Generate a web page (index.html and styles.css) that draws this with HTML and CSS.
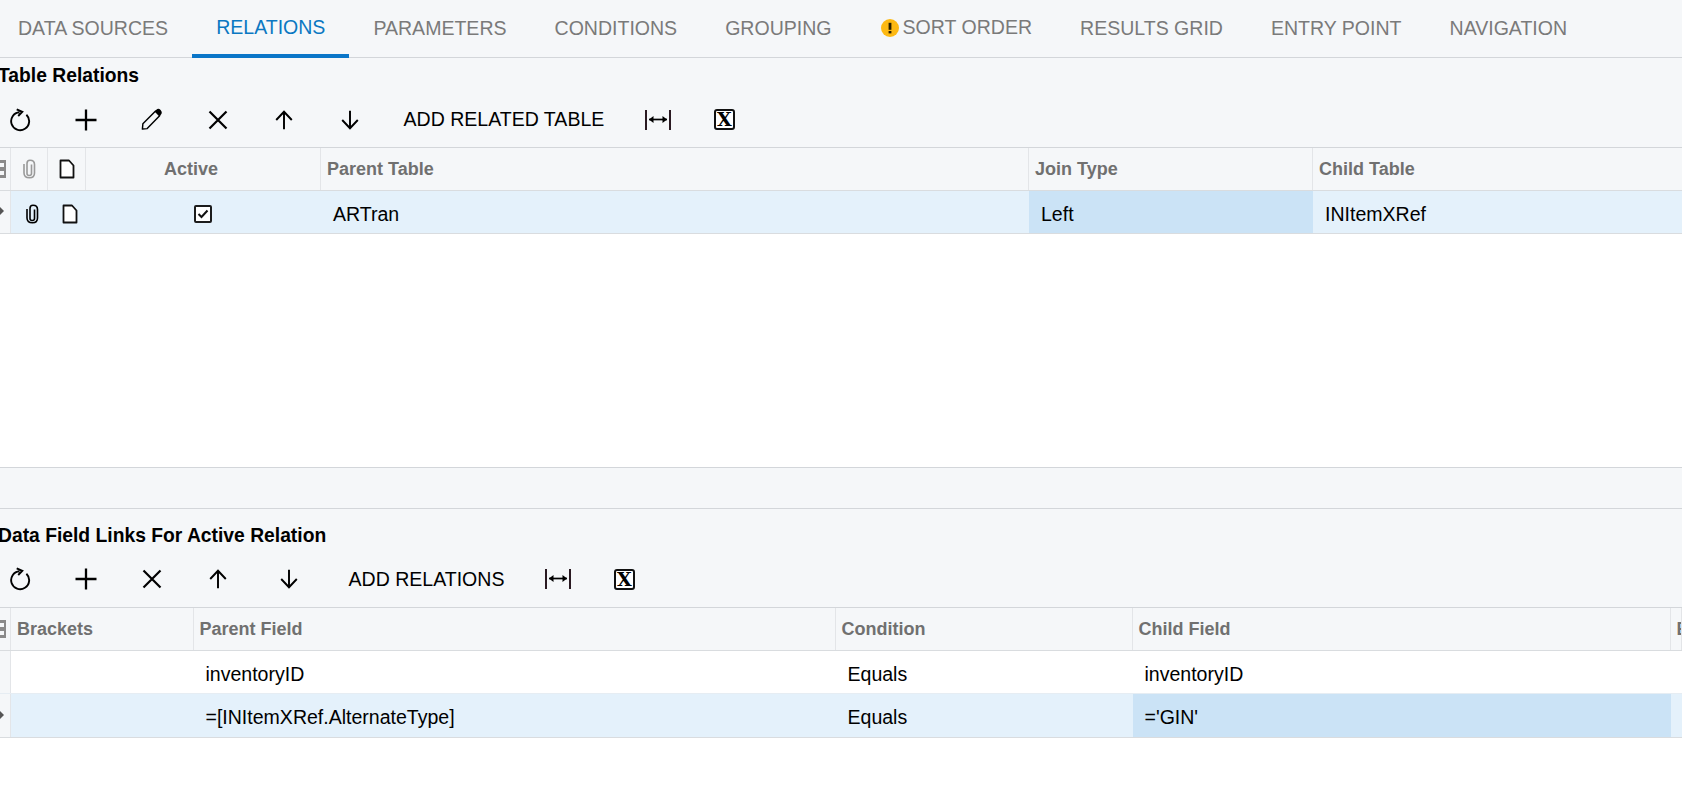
FILE: index.html
```
<!DOCTYPE html>
<html lang="en">
<head>
<meta charset="utf-8">
<title>Relations</title>
<link rel="stylesheet" href="styles.css">
</head>
<body>
<svg class="defs" width="0" height="0" aria-hidden="true">
  <symbol id="i-refresh" viewBox="0 0 24 24"><path d="M18.400 6.700A9 9 0 1 1 11.500 4.200M8.700 1.300L14.300 3.800L10.200 8" fill="none" stroke="currentColor" stroke-width="1.900"/></symbol>
  <symbol id="i-plus" viewBox="0 0 24 24"><path d="M1.500 12H22.500M12 1.500V22.500" fill="none" stroke="currentColor" stroke-width="2.300"/></symbol>
  <symbol id="i-pencil" viewBox="0 0 24 24"><path d="M2.500 22L3 16.500L16 3.500L20.500 8L7.500 21.500Z" fill="none" stroke="currentColor" stroke-width="1.500" stroke-linejoin="round"/><path d="M15.500 3L18 1Q19.800 .2 21.500 2Q23.500 4 22.500 6L20.500 8.500Z" fill="currentColor"/></symbol>
  <symbol id="i-x" viewBox="0 0 24 24"><path d="M3.500 3.500L20.500 20.500M20.500 3.500L3.500 20.500" fill="none" stroke="currentColor" stroke-width="2.200"/></symbol>
  <symbol id="i-up" viewBox="0 0 24 24"><path d="M12 22V3.500M3.500 12L12 3L20.500 12" fill="none" stroke="currentColor" stroke-width="2.100"/></symbol>
  <symbol id="i-down" viewBox="0 0 24 24"><path d="M12 2V20.500M3.500 12L12 21L20.500 12" fill="none" stroke="currentColor" stroke-width="2.100"/></symbol>
  <symbol id="i-fit" viewBox="0 0 28 24"><path d="M2 2V22M26 2V22" fill="none" stroke="#2a1a22" stroke-width="2"/><path d="M5 11.500H23" fill="none" stroke="currentColor" stroke-width="1.700"/><path d="M5 11.500L9.500 8V15ZM23 11.500L18.500 8V15Z" fill="currentColor"/></symbol>
  <symbol id="i-clip" viewBox="0 0 14 20"><path d="M9.500 5.500V14.500Q9.500 16.500 7.200 16.500Q5 16.500 5 14.500V4.500Q5 1.300 8 1.300Q12.500 1.300 12.500 5.500V14Q12.500 18.800 7.500 18.800Q2 18.800 2 14V5" fill="none" stroke="currentColor" stroke-width="1.600"/></symbol>
  <symbol id="i-doc" viewBox="0 0 16 20"><path d="M1.500 1.500H10L14.500 6.500V18.500H1.500Z" fill="#fff" stroke="currentColor" stroke-width="1.800" stroke-linejoin="round"/></symbol>
  <symbol id="i-check" viewBox="0 0 18 18"><rect x="1" y="1" width="16" height="16" rx="1" fill="#fff" stroke="#1c1c1c" stroke-width="2"/><path d="M4.500 9L7.500 12L13.500 5.500" fill="none" stroke="#111" stroke-width="2"/></symbol>
  <symbol id="i-warn" viewBox="0 0 18 18"><circle cx="9" cy="9" r="9" fill="#fdb913"/><rect x="7.600" y="3.800" width="2.800" height="7" fill="#2a2000"/><rect x="7.600" y="12" width="2.800" height="2.400" fill="#2a2000"/></symbol>
  <symbol id="i-rowhead" viewBox="0 0 8 20"><path d="M0 1H6V19H0Z" fill="currentColor"/><path d="M0 4H4V8H0ZM0 12H4V16H0Z" fill="#f5f7f9"/></symbol>
  <symbol id="i-arrow" viewBox="0 0 4 8"><path d="M0 0L4 4L0 8Z" fill="currentColor"/></symbol>
</svg>

<nav class="tabs">
  <a class="tab">DATA SOURCES</a>
  <a class="tab tab-active">RELATIONS</a>
  <a class="tab">PARAMETERS</a>
  <a class="tab">CONDITIONS</a>
  <a class="tab">GROUPING</a>
  <a class="tab tab-warn"><svg class="warn"><use href="#i-warn"/></svg><span class="tab-warn-text">SORT ORDER</span></a>
  <a class="tab">RESULTS GRID</a>
  <a class="tab">ENTRY POINT</a>
  <a class="tab">NAVIGATION</a>
</nav>

<section class="panel panel-top">
  <h2 class="panel-title">Table Relations</h2>
  <div class="toolbar">
    <button class="tool"><svg class="ico ico-refresh"><use href="#i-refresh"/></svg></button>
    <button class="tool"><svg class="ico ico-plus"><use href="#i-plus"/></svg></button>
    <button class="tool"><svg class="ico ico-pencil"><use href="#i-pencil"/></svg></button>
    <button class="tool"><svg class="ico ico-x"><use href="#i-x"/></svg></button>
    <button class="tool"><svg class="ico ico-arrow"><use href="#i-up"/></svg></button>
    <button class="tool"><svg class="ico ico-arrow"><use href="#i-down"/></svg></button>
    <button class="tool tool-text">ADD RELATED TABLE</button>
    <button class="tool"><svg class="ico ico-fit"><use href="#i-fit"/></svg></button>
    <button class="tool"><span class="excel">X</span></button>
  </div>
  <div class="grid grid-relations">
    <div class="row row-head">
      <div class="cell cell-rowhead"><svg class="ico-rowhead"><use href="#i-rowhead"/></svg></div>
      <div class="cell cell-icon"><svg class="ico-clip ico-muted"><use href="#i-clip"/></svg></div>
      <div class="cell cell-icon"><svg class="ico-doc"><use href="#i-doc"/></svg></div>
      <div class="cell cell-active-head">Active</div>
      <div class="cell">Parent Table</div>
      <div class="cell">Join Type</div>
      <div class="cell cell-last">Child Table</div>
    </div>
    <div class="row row-body row-selected">
      <div class="cell cell-rowhead"><svg class="ico-rowarrow"><use href="#i-arrow"/></svg></div>
      <div class="cell cell-icon cell-icon-body"><svg class="ico-clip"><use href="#i-clip"/></svg></div>
      <div class="cell cell-icon cell-icon-body"><svg class="ico-doc"><use href="#i-doc"/></svg></div>
      <div class="cell cell-center"><svg class="ico-check"><use href="#i-check"/></svg></div>
      <div class="cell">ARTran</div>
      <div class="cell cell-current">Left</div>
      <div class="cell cell-last">INItemXRef</div>
    </div>
  </div>
</section>

<div class="splitter"></div>

<section class="panel panel-bottom">
  <h2 class="panel-title">Data Field Links For Active Relation</h2>
  <div class="toolbar">
    <button class="tool"><svg class="ico ico-refresh"><use href="#i-refresh"/></svg></button>
    <button class="tool"><svg class="ico ico-plus"><use href="#i-plus"/></svg></button>
    <button class="tool"><svg class="ico ico-x"><use href="#i-x"/></svg></button>
    <button class="tool"><svg class="ico ico-arrow"><use href="#i-up"/></svg></button>
    <button class="tool tool-shift"><svg class="ico ico-arrow"><use href="#i-down"/></svg></button>
    <button class="tool tool-text tool-shift">ADD RELATIONS</button>
    <button class="tool"><svg class="ico ico-fit"><use href="#i-fit"/></svg></button>
    <button class="tool"><span class="excel">X</span></button>
  </div>
  <div class="grid grid-links">
    <div class="row row-head">
      <div class="cell cell-rowhead"><svg class="ico-rowhead"><use href="#i-rowhead"/></svg></div>
      <div class="cell">Brackets</div>
      <div class="cell">Parent Field</div>
      <div class="cell">Condition</div>
      <div class="cell">Child Field</div>
      <div class="cell cell-clip">E</div>
    </div>
    <div class="row row-body row-plain">
      <div class="cell cell-rowhead"></div>
      <div class="cell"></div>
      <div class="cell">inventoryID</div>
      <div class="cell">Equals</div>
      <div class="cell">inventoryID</div>
      <div class="cell"></div>
    </div>
    <div class="row row-body row-selected row-tall">
      <div class="cell cell-rowhead"><svg class="ico-rowarrow"><use href="#i-arrow"/></svg></div>
      <div class="cell"></div>
      <div class="cell">=[INItemXRef.AlternateType]</div>
      <div class="cell">Equals</div>
      <div class="cell cell-current">='GIN'</div>
      <div class="cell"></div>
    </div>
  </div>
</section>
</body>
</html>
```

FILE: styles.css
```
* { box-sizing: border-box; }

html, body {
  margin: 0;
  height: 792px;
  overflow: hidden;
  background: #fff;
  font-family: "Liberation Sans", Arial, sans-serif;
  color: #000;
}

.defs { display: block; height: 0; }

.tabs {
  display: flex;
  height: 58px;
  margin-left: -6px;
  background: #f5f7f9;
  border-bottom: 1px solid #d3d6da;
  font-size: 19.55px;
  color: #7a7a7a;
}

.tab {
  display: flex;
  align-items: center;
  gap: 4px;
  height: 58px;
  padding: 0 24px 1px;
}

.tab-active {
  color: #0b78c2;
  border-bottom: 4px solid #0a76c8;
  padding-bottom: 0;
}

.tab-warn { padding-bottom: 3px; }

.warn { width: 18px; height: 18px; margin-left: 1px; }

.panel { background: #f5f7f9; }

.panel-title {
  margin: 0 0 0 -2px;
  height: 34px;
  padding-top: 7px;
  font-size: 19.3px;
  line-height: 22px;
  font-weight: 700;
}

.panel-bottom .panel-title { padding-top: 16px; height: 42px; }

.toolbar {
  display: flex;
  align-items: center;
  height: 55px;
  margin-left: -13.5px;
}

.panel-bottom .toolbar { height: 56px; }

.tool {
  display: flex;
  align-items: center;
  justify-content: center;
  width: 66px;
  height: 40px;
  padding: 0;
  border: 0;
  background: none;
  color: #000;
  font: inherit;
  font-size: 19.55px;
}

.tool-text { width: auto; padding: 0 21px; }
.tool-shift { margin-left: 5.5px; }

.ico { display: block; }
.ico-refresh { width: 24px; height: 24px; }
.ico-plus { width: 24px; height: 24px; }
.ico-pencil { width: 23px; height: 23px; }
.ico-x { width: 24px; height: 24px; }
.ico-arrow { width: 22px; height: 22px; }
.ico-fit { width: 28px; height: 24px; }

.excel {
  display: block;
  width: 21px;
  height: 21px;
  border: 2px solid #111;
  border-radius: 3px;
  background: #fff;
  font-family: "DejaVu Serif", serif;
  font-weight: 700;
  font-size: 19px;
  line-height: 16px;
  text-align: center;
}

.grid { background: #fff; border-top: 1px solid #d3d6da; }

.row { display: grid; }
.grid-relations .row { grid-template-columns: 11px 37px 38px 235px 708px 284px 1fr; }
.grid-links .row { grid-template-columns: 11px 182.5px 642px 297px 538px 1fr; }

.grid-relations { height: 320px; }

.cell {
  display: flex;
  align-items: center;
  min-width: 0;
  overflow: hidden;
  white-space: nowrap;
}

.row-head {
  height: 43px;
  background: #f5f7f9;
  border-bottom: 1px solid #d9dcdf;
  font-size: 18px;
  font-weight: 700;
  color: #707070;
}

.row-head .cell { padding-left: 6px; border-right: 1px solid #e3e5e8; }
.row-head .cell-last { border-right: 0; }
.row-head .cell-rowhead { padding: 0; }
.row-head .cell-icon { justify-content: center; padding: 0; }
.row-head .cell-active-head { justify-content: center; padding: 0 24px 0 0; }

.cell-clip { padding-left: 6px; }

.row-body {
  height: 43px;
  border-bottom: 1px solid #d9dcdf;
  font-size: 19.55px;
}

.row-body .cell { padding: 4px 0 0 12px; }
.row-tall { height: 44px; }
.row-tall .cell { padding-top: 3px; }
.row-body .cell-rowhead { padding: 0; background: #f5f7f9; border-right: 1px solid #e3e5e8; color: #555; }
.row-body .cell-icon { justify-content: center; padding: 3px 0 0 5px; }
.row-body .cell-center { justify-content: center; padding: 3px 0 0; }

.row-plain { border-bottom-color: #e6edf3; }
.row-selected { background: #e4f1fb; }
.cell-current { background: #cbe3f6; }

.ico-rowhead { width: 8px; height: 20px; color: #8a8a8a; }
.ico-rowarrow { width: 4px; height: 8px; margin-top: -2px; }
.ico-clip { width: 14px; height: 20px; }
.ico-muted { color: #9a9a9a; }
.ico-doc { width: 16px; height: 20px; color: #111; }
.ico-check { width: 18px; height: 18px; margin-left: -2px; }

.splitter {
  height: 42px;
  background: #f5f7f9;
  border-top: 1px solid #d3d6da;
  border-bottom: 1px solid #d3d6da;
}
```
